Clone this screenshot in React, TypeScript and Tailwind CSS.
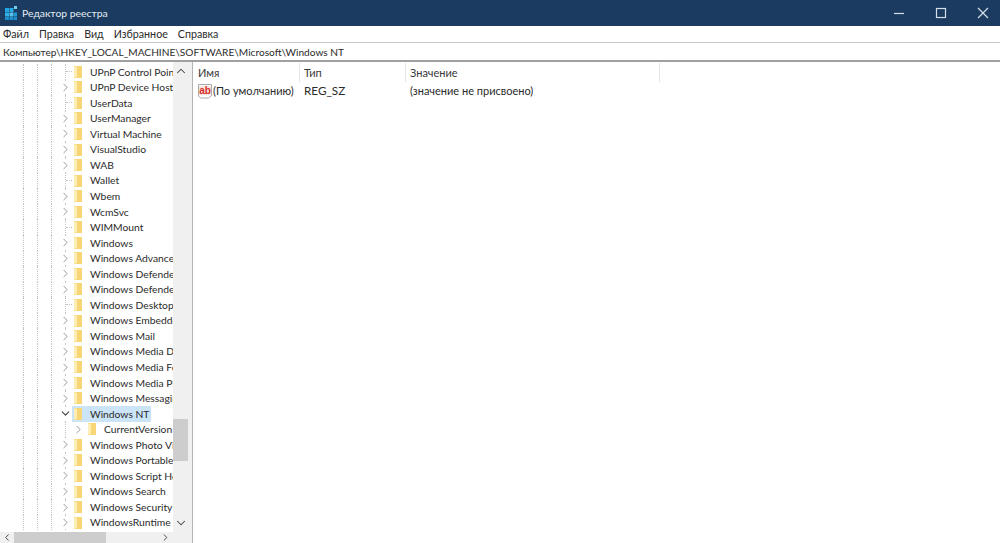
import { ChevronRight, ChevronDown, ChevronUp, ChevronLeft } from "lucide-react";

type TreeRow = {
  label: string;
  leaf?: boolean;
  open?: boolean;
  child?: boolean;
};

const rows: TreeRow[] = [
  { label: "UPnP Control Point", leaf: true },
  { label: "UPnP Device Host" },
  { label: "UserData", leaf: true },
  { label: "UserManager" },
  { label: "Virtual Machine" },
  { label: "VisualStudio" },
  { label: "WAB" },
  { label: "Wallet", leaf: true },
  { label: "Wbem" },
  { label: "WcmSvc" },
  { label: "WIMMount", leaf: true },
  { label: "Windows" },
  { label: "Windows Advanced Threat" },
  { label: "Windows Defender" },
  { label: "Windows Defender Security" },
  { label: "Windows Desktop Search", leaf: true },
  { label: "Windows Embedded" },
  { label: "Windows Mail" },
  { label: "Windows Media Device" },
  { label: "Windows Media Foundation" },
  { label: "Windows Media Player" },
  { label: "Windows Messaging" },
  { label: "Windows NT", open: true },
  { label: "CurrentVersion", child: true },
  { label: "Windows Photo Viewer" },
  { label: "Windows Portable Devices" },
  { label: "Windows Script Host" },
  { label: "Windows Search" },
  { label: "Windows Security" },
  { label: "WindowsRuntime" },
];

function Folder() {
  return (
    <svg width="11" height="14" viewBox="0 0 11 14" className="shrink-0">
      <rect x="2" y="1" width="8" height="12" fill="#fbe08c" />
      <rect x="5" y="1" width="5" height="12" fill="#f8d675" />
      <rect x="2" y="2" width="3" height="10" fill="#fdeeb5" />
    </svg>
  );
}

function Guide() {
  return <div className="h-full w-[14px] shrink-0 border-l border-dotted border-[#c4c4c4]" />;
}

function Row({ row }: { row: TreeRow }) {
  return (
    <div className="flex h-[15.55px] items-center pl-[23px]">
      <Guide />
      <Guide />
      <Guide />
      <div className="relative flex h-full w-[7px] shrink-0 items-center border-l border-dotted border-[#c4c4c4]">
        {row.leaf && <div className="w-[6px] border-t border-dotted border-[#c4c4c4]" />}
        {!row.leaf && !row.child && !row.open && (
          <ChevronRight size={13} strokeWidth={1.5} className="absolute -left-[7px] bg-white text-[#808080]" />
        )}
        {row.open && <ChevronDown size={13} strokeWidth={2} className="absolute -left-[7px] bg-white text-[#404040]" />}
      </div>
      {row.child && (
        <div className="relative flex h-full w-[14px] shrink-0 items-center">
          <ChevronRight size={13} strokeWidth={1.5} className="absolute left-[0px] text-[#808080]" />
        </div>
      )}
      <div className={row.open ? "flex h-full items-center bg-[#cce4f7]" : "flex h-full items-center"}>
        <Folder />
        <span className="whitespace-nowrap pl-[7px] pr-[2px]">{row.label}</span>
      </div>
    </div>
  );
}

function RegIcon() {
  return (
    <svg width="16" height="16" viewBox="0 0 16 16" className="shrink-0">
      <path d="M1.5 1.5H14.5V12.5L11.5 15H3.5L1.5 13Z" fill="#fff" stroke="#a9a9a9" />
      <rect x="2" y="3" width="12" height="9" fill="#fbe3e0" />
      <text x="8" y="10.5" textAnchor="middle" fontSize="10" fontWeight="700" fill="#d3322a" fontFamily="Liberation Sans, sans-serif">
        ab
      </text>
    </svg>
  );
}

export default function App() {
  return (
    <div className="flex h-[543px] w-[1000px] flex-col overflow-hidden bg-white font-['Lato','Open_Sans',sans-serif] text-[10.3px] leading-none text-[#2b2b2b]">
      {/* Title bar */}
      <div className="flex h-[26px] shrink-0 items-center bg-[#1b3c60] pl-[5px] text-white">
        <svg width="12" height="14" viewBox="0 0 12 14" className="shrink-0">
          <rect x="9" y="0" width="3" height="3" fill="#6fcdf0" />
          <rect x="0" y="2" width="4" height="4" fill="#1fa6e2" />
          <rect x="4.5" y="2" width="4" height="4" fill="#27ace6" />
          <rect x="0" y="6.5" width="4" height="4" fill="#2fb2e8" />
          <rect x="4.5" y="6.5" width="4" height="4" fill="#55c3ee" />
          <rect x="9" y="6.5" width="3" height="4" fill="#1f9bd8" />
          <rect x="0" y="11" width="4" height="3" fill="#1d8fca" />
          <rect x="4.5" y="11" width="4" height="3" fill="#1d95d2" />
          <rect x="9" y="11" width="3" height="3" fill="#1d8fca" />
        </svg>
        <span className="pl-[5px] text-[10.4px] text-[#e4ebf2]">Редактор реестра</span>
        <div className="ml-auto flex items-center gap-[30px] pr-[11px] text-[#d5dee8]">
          <svg width="12" height="12" viewBox="0 0 12 12">
            <path d="M1 6.5H11" stroke="currentColor" strokeWidth="1.2" />
          </svg>
          <svg width="12" height="12" viewBox="0 0 12 12">
            <rect x="1.5" y="1.5" width="9" height="9" fill="none" stroke="currentColor" strokeWidth="1.2" />
          </svg>
          <svg width="12" height="12" viewBox="0 0 12 12">
            <path d="M1 1L11 11M11 1L1 11" stroke="currentColor" strokeWidth="1.2" />
          </svg>
        </div>
      </div>

      {/* Menu */}
      <div className="flex h-[17px] shrink-0 items-center gap-[10px] border-b border-[#c8c8c8] pl-[3px] text-[10.7px]">
        <span>Файл</span>
        <span>Правка</span>
        <span>Вид</span>
        <span>Избранное</span>
        <span>Справка</span>
      </div>

      {/* Address bar */}
      <div className="flex h-[19px] shrink-0 items-center border-b-2 border-[#a0a0a0] pl-[3px] pt-[1px] text-[10.15px]">
        Компьютер\HKEY_LOCAL_MACHINE\SOFTWARE\Microsoft\Windows NT
      </div>

      <div className="flex min-h-0 flex-1">
        {/* Tree */}
        <div className="flex w-[188px] shrink-0 flex-col">
          <div className="flex min-h-0 flex-1">
            <div className="w-[173px] shrink-0 overflow-hidden pt-[2px]">
              {rows.map((row) => (
                <Row key={row.label} row={row} />
              ))}
            </div>
            <div className="flex w-[15px] shrink-0 flex-col items-center bg-[#f0f0f0]">
              <ChevronUp size={14} strokeWidth={1.75} className="mt-[2px] text-[#404040]" />
              <div className="mt-[341px] h-[42px] w-full bg-[#cdcdcd]" />
              <ChevronDown size={14} strokeWidth={1.75} className="mt-auto mb-[2px] text-[#404040]" />
            </div>
          </div>
          <div className="flex h-[11px] shrink-0 items-center bg-[#f0f0f0]">
            <ChevronLeft size={11} strokeWidth={2} className="w-[14px] text-[#404040]" />
            <div className="h-full w-[92px] bg-[#cdcdcd]" />
            <ChevronRight size={11} strokeWidth={2} className="ml-[54px] text-[#404040]" />
          </div>
        </div>
        <div className="w-[5px] shrink-0 border-r border-[#b4b4b4] bg-[#f0f0f0]" />

        {/* Values */}
        <div className="min-w-0 flex-1 text-[11px]">
          <div className="flex h-[20px] items-center pt-[1px] text-[#3a3a3a]">
            <div className="flex h-full w-[107px] items-center border-r border-[#e5e5e5] pl-[5px]">Имя</div>
            <div className="flex h-full w-[106px] items-center border-r border-[#e5e5e5] pl-[4px]">Тип</div>
            <div className="flex h-full w-[254px] items-center border-r border-[#e5e5e5] pl-[4px]">Значение</div>
          </div>
          <div className="flex h-[17px] items-center">
            <div className="flex w-[107px] items-center pl-[4px]">
              <RegIcon />
              <span className="whitespace-nowrap">(По умолчанию)</span>
            </div>
            <div className="w-[106px] pl-[4px] text-[11.7px]">REG_SZ</div>
            <div className="pl-[4px]">(значение не присвоено)</div>
          </div>
        </div>
      </div>
    </div>
  );
}
